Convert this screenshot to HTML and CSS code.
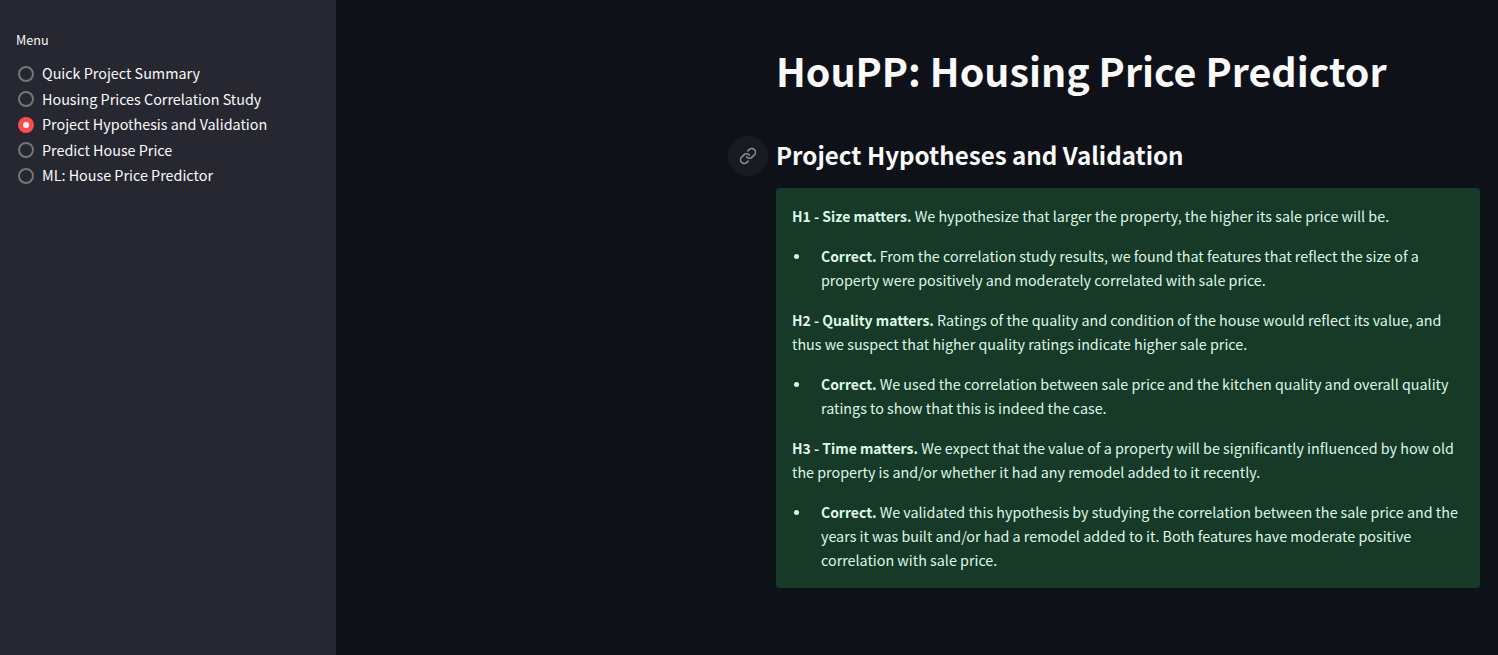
FILE: index.html
```html
<!DOCTYPE html>
<html lang="en">
<head>
<meta charset="utf-8">
<title>HouPP: Housing Price Predictor</title>
<link rel="stylesheet" href="styles.css">
</head>
<body>
<div class="app">
  <aside class="sidebar">
    <div class="menu-label">Menu</div>
    <div class="radio-group">
      <div class="radio"><span class="dot"></span><span>Quick Project Summary</span></div>
      <div class="radio"><span class="dot"></span><span>Housing Prices Correlation Study</span></div>
      <div class="radio"><span class="dot on"></span><span>Project Hypothesis and Validation</span></div>
      <div class="radio"><span class="dot"></span><span>Predict House Price</span></div>
      <div class="radio"><span class="dot"></span><span>ML: House Price Predictor</span></div>
    </div>
  </aside>
  <main class="main">
    <div class="content">
      <h1 class="title">HouPP: Housing Price Predictor</h1>
      <h2 class="subtitle">
        <span class="anchor"><svg viewBox="0 0 24 24" width="18" height="18" fill="none" stroke="currentColor" stroke-width="2" stroke-linecap="round" stroke-linejoin="round"><path d="M10 13a5 5 0 0 0 7.54.54l3-3a5 5 0 0 0-7.07-7.07l-1.72 1.71"/><path d="M14 11a5 5 0 0 0-7.54-.54l-3 3a5 5 0 0 0 7.07 7.07l1.71-1.71"/></svg></span>
        Project Hypotheses and Validation
      </h2>
      <div class="success">
        <p><strong>H1 - Size matters.</strong> We hypothesize that larger the property, the higher its sale price will be.</p>
        <ul><li><strong>Correct.</strong> From the correlation study results, we found that features that reflect the size of a property were positively and moderately correlated with sale price.</li></ul>
        <p><strong>H2 - Quality matters.</strong> Ratings of the quality and condition of the house would reflect its value, and thus we suspect that higher quality ratings indicate higher sale price.</p>
        <ul><li><strong>Correct.</strong> We used the correlation between sale price and the kitchen quality and overall quality ratings to show that this is indeed the case.</li></ul>
        <p><strong>H3 - Time matters.</strong> We expect that the value of a property will be significantly influenced by how old the property is and/or whether it had any remodel added to it recently.</p>
        <ul><li><strong>Correct.</strong> We validated this hypothesis by studying the correlation between the sale price and the years it was built and/or had a remodel added to it. Both features have moderate positive correlation with sale price.</li></ul>
      </div>
    </div>
  </main>
</div>
</body>
</html>
```

FILE: styles.css
```css
* { box-sizing: border-box; }
html, body { margin: 0; height: 100%; }
body {
  background: #0e1117;
  color: #fafafa;
  font-family: "Noto Sans CJK JP", "Noto Sans", sans-serif;
  font-size: 14.35px;
  overflow: hidden;
}
.app { display: flex; height: 655px; }
.sidebar {
  width: 336px;
  flex: none;
  background: #262730;
  padding: 31px 16px 0;
}
.menu-label { font-size: 12.6px; line-height: 18px; margin-bottom: 11px; }
.radio-group { display: flex; flex-direction: column; }
.radio { display: flex; align-items: center; height: 25.5px; padding-left: 2px; gap: 8px; font-size: 14.35px; }
.dot {
  width: 16px; height: 16px; border-radius: 50%;
  border: 2px solid #73747c; background: #262730; flex: none;
  margin-top: 1.5px;
}
.dot.on { background: #ff4b4b; border: 5px solid #ff4b4b; position: relative; }
.dot.on::after { content: ""; position: absolute; inset: 0; background: #fff; border-radius: 50%; }
.main { flex: 1; display: flex; justify-content: flex-end; padding-right: 18px; }
.content { width: 704px; padding-top: 38px; }
.title { margin: 0; font-size: 39.4px; font-weight: 700; line-height: 64px; }
.subtitle { margin: 31px 0 0; position: relative; font-size: 24.15px; font-weight: 700; line-height: 44px; }
.anchor {
  position: absolute; left: -48px; top: 3px; width: 40px; height: 40px;
  border-radius: 50%; background: #181b21; color: #8a8c90;
  display: flex; align-items: center; justify-content: center;
}
.success {
  margin-top: 11px; background: #173928; color: #dff7e6; border-radius: 4px;
  padding: 16px; line-height: 24px; font-size: 14.32px;
}
.success p { margin: 0 0 16px; }
.success ul { margin: 0 0 16px; padding-left: 29px; list-style: none; }
.success ul:last-child { margin-bottom: 0; }
.success li { position: relative; }
.success li::before {
  content: ""; position: absolute; left: -27px; top: 10px;
  width: 5px; height: 5px; border-radius: 50%; background: currentColor;
}
.success strong { font-weight: 700; font-size: 13.95px; }
```
